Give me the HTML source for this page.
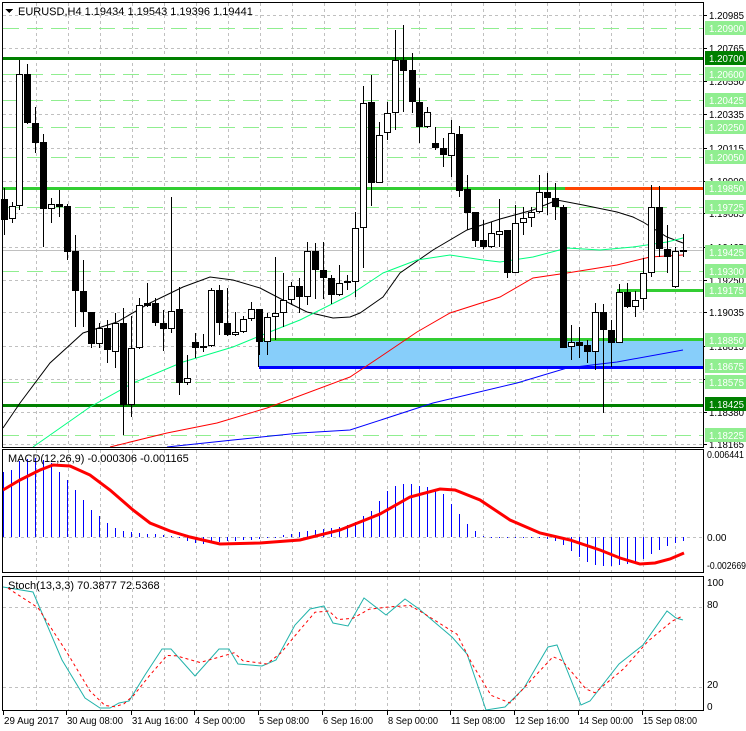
<!DOCTYPE html>
<html><head><meta charset="utf-8"><style>
html,body{margin:0;padding:0;background:#fff;width:746px;height:731px;overflow:hidden}
svg text{font-family:"Liberation Sans",sans-serif;font-size:10px}
</style></head><body>
<svg id="s" width="746" height="731" xmlns="http://www.w3.org/2000/svg" shape-rendering="crispEdges">
<rect width="746" height="731" fill="#fff"/>
<g id="grid"></g>
<g id="lv"></g>
<g id="ma" shape-rendering="auto"></g>
<g id="cd"></g>
<g id="mc"></g>
<g id="st" shape-rendering="auto"></g>
<g id="fr" fill="none" stroke="#000" stroke-width="1">
<rect x="2.5" y="2.5" width="701" height="445"/>
<rect x="2.5" y="449.5" width="701" height="123"/>
<rect x="2.5" y="576.5" width="701" height="134"/>
</g>
<g id="lab"></g>
<text x="18" y="15" style="font-size:11px">EURUSD,H4  1.19434 1.19543 1.19396 1.19441</text>
<path d="M5 9h8l-4 4z" fill="#000"/>
<text x="8" y="462" style="font-size:11px">MACD(12,26,9) -0.000306 -0.001165</text>
<text x="8" y="589" style="font-size:11px">Stoch(13,3,3) 70.3877 72.5368</text>
</svg>
<script>
const NS="http://www.w3.org/2000/svg";
function el(p,t,a){const e=document.createElementNS(NS,t);for(const k in a)e.setAttribute(k,a[k]);document.getElementById(p).appendChild(e);return e;}
function txt(p,x,y,s,fill,len){const a={x:x,y:y,fill:fill||'#000'};if(len){a.textLength=len;a.lengthAdjust='spacingAndGlyphs';}const e=el(p,'text',a);e.textContent=s;return e;}
for(let k=1;k<22;k++){const x=Math.round(4+31.95*k)+.5;
 if(x>703)break;
 el('grid','line',{x1:x,y1:3,x2:x,y2:447,stroke:'#c0c0c0','stroke-dasharray':'3,3'});
 el('grid','line',{x1:x,y1:450,x2:x,y2:572,stroke:'#c0c0c0','stroke-dasharray':'3,3'});
 el('grid','line',{x1:x,y1:577,x2:x,y2:710,stroke:'#c0c0c0','stroke-dasharray':'3,3'});}
const hy=[15,48,81,114,148,181,213,247,280,312,346,379,412,444];
const hl=['1.20985','1.20765','1.20550','1.20335','1.20115','1.19900','1.19685','1.19465','1.19250','1.19035','1.18815','1.18600','1.18380','1.18165'];
hy.forEach((y,i)=>{el('grid','line',{x1:3,y1:y+.5,x2:703,y2:y+.5,stroke:'#c0c0c0','stroke-dasharray':'3,3'});
 el('lab','line',{x1:703,y1:y+.5,x2:707,y2:y+.5,stroke:'#000'});txt('lab',709,y+4,hl[i],'#000',35);});
[607,687].forEach(y=>el('grid','line',{x1:3,y1:y+.5,x2:703,y2:y+.5,stroke:'#c0c0c0','stroke-dasharray':'3,3'}));
el('grid','line',{x1:3,y1:537.5,x2:703,y2:537.5,stroke:'#c0c0c0','stroke-dasharray':'3,3'});
const y=p=>15+(1.20985-p)*15213;
el('lv','rect',{x:259,y:339,width:444,height:28,fill:'#87cefa'});
[1.2090,1.2060,1.20425,1.2025,1.2005,1.19725,1.1930,1.18575,1.18225].forEach(p=>{const yy=Math.round(y(p))+.5;
 el('lv','line',{x1:3,y1:yy,x2:703,y2:yy,stroke:'#90ee90','stroke-dasharray':'16,8'});});
el('lv','line',{x1:3,y1:250.5,x2:703,y2:250.5,stroke:'#c0c0c0'});
el('lv','rect',{x:3,y:57,width:700,height:3,fill:'#008000'});
el('lv','rect',{x:3,y:404,width:700,height:3,fill:'#008000'});
el('lv','rect',{x:3,y:187,width:562,height:3,fill:'#32cd32'});
el('lv','rect',{x:565,y:187,width:138,height:3,fill:'#ff4500'});
el('lv','rect',{x:617,y:289,width:86,height:3,fill:'#32cd32'});
el('lv','rect',{x:259,y:338,width:444,height:3,fill:'#32cd32'});
el('lv','rect',{x:259,y:366,width:444,height:3,fill:'#0000ff'});
el('lv','rect',{x:258,y:339,width:1,height:28,fill:'#000'});
[[1.2090,0],[1.2070,1],[1.2060,0],[1.20425,0],[1.2025,0],[1.2005,0],[1.1985,0],[1.19725,0],[1.19425,0],[1.1930,0],[1.19175,0],[1.1885,0],[1.18675,0],[1.18575,0],[1.18425,1],[1.18225,0]].forEach(([p,d])=>{
 const yy=Math.round(y(p));el('lab','rect',{x:705,y:yy-7,width:41,height:14,fill:d?'#008000':'#90ee90'});
 txt('lab',709,yy+4,p.toFixed(5),'#fff',35);});
txt('lab',707,458,'0.006441','#000',37);txt('lab',707,541,'0.00');txt('lab',707,569,'-0.002669','#000',39);
txt('lab',707,586,'100');txt('lab',707,608,'80');txt('lab',707,688,'20');txt('lab',707,710,'0');
[[3,'29 Aug 2017',55],[66,'30 Aug 08:00',56],[131,'31 Aug 16:00',56],[194,'4 Sep 00:00',50],[258,'5 Sep 08:00',50],[322,'6 Sep 16:00',50],[387,'8 Sep 00:00',50],[450,'11 Sep 08:00',54],[514,'12 Sep 16:00',54],[578,'14 Sep 00:00',54],[642,'15 Sep 08:00',54]].forEach(([x,s,l])=>{
 el('lab','line',{x1:x+.5,y1:711,x2:x+.5,y2:715,stroke:'#000'});txt('lab',x+1,724,s,'#000',l);});
function pl(g,pts,col,w,dash){const a={points:pts.map(p=>p.join(',')).join(' '),fill:'none',stroke:col,'stroke-width':w};if(dash)a['stroke-dasharray']=dash;el(g,'polyline',a);}
pl('ma',[[3,428],[20,403],[50,363],[83,333],[117,322],[150,303],[183,287],[210,277],[233,280],[260,288],[283,300],[307,312],[333,318],[350,317],[360,313],[383,297],[400,273],[433,250],[467,230],[500,219],[533,210],[557,200],[583,205],[617,212],[633,217],[643,222],[667,237],[683,243]],'#000',1);
pl('ma',[[33,447],[90,407],[133,383],[183,362],[233,347],[267,333],[300,320],[350,295],[383,273],[417,260],[450,255],[483,260],[500,262],[533,257],[567,248],[600,250],[633,247],[667,242],[683,238]],'#00ff7f',1);
pl('ma',[[110,447],[167,433],[217,423],[267,408],[350,377],[383,355],[417,332],[450,313],[500,297],[533,278],[567,273],[617,265],[650,257],[683,255]],'#ff0000',1);
pl('ma',[[167,447],[233,440],[300,433],[350,430],[433,403],[517,383],[567,368],[617,362],[683,350]],'#0000ff',1);
const C=[[4,199,220,188,235,0],[12,206,219,202,223,1],[19,74,206,60,210,1],[27,74,123,64,124,0],[35,123,143,107,153,0],[43,142,209,134,247,0],[51,204,209,198,223,1],[59,204,207,190,217,0],[67,206,252,204,260,0],[75,251,291,235,327,0],[83,291,312,260,327,0],[91,312,344,312,348,0],[99,328,344,323,348,1],[107,328,350,320,363,0],[115,323,352,313,368,1],[123,323,405,308,435,0],[131,348,405,316,417,1],[139,305,348,298,349,1],[147,303,306,283,307,0],[155,303,323,298,326,0],[163,323,329,310,351,0],[171,311,329,197,333,1],[179,309,383,287,395,0],[187,378,383,355,385,1],[195,342,348,333,358,0],[203,346,348,334,352,1],[211,290,346,288,347,1],[219,290,323,285,335,0],[227,323,335,288,336,0],[235,332,335,312,336,1],[243,319,332,316,333,1],[251,309,319,302,321,1],[259,309,342,309,355,0],[267,317,342,313,355,1],[275,313,317,257,340,1],[283,300,313,273,327,1],[291,286,300,282,305,1],[299,286,297,278,313,0],[307,251,297,242,305,1],[315,251,270,243,299,0],[323,270,278,242,299,0],[331,278,295,275,304,0],[339,283,295,265,296,1],[347,281,283,275,290,1],
[355,228,282,212,297,1],[363,103,228,86,268,1],[371,102,183,75,206,0],[379,135,183,122,183,1],[387,113,133,102,140,1],[395,60,113,30,130,1],[403,60,71,25,112,0],[412,70,102,53,113,0],[419,102,127,88,143,0],[427,112,127,107,128,1],[435,143,148,127,150,0],[443,148,155,138,167,0],[451,133,156,120,177,1],[459,134,191,126,197,0],[467,189,213,175,230,0],[475,212,241,212,247,0],[483,240,247,220,249,0],[491,233,247,222,248,1],[499,231,235,199,247,1],[507,230,273,230,278,0],[515,223,273,205,273,1],[523,218,223,207,235,1],[531,212,218,207,227,1],[539,192,212,175,213,1],[547,192,198,173,215,0],[555,198,207,183,220,0],[563,207,348,205,348,0],[571,342,347,325,360,1],[579,342,346,327,358,0],[587,345,352,340,363,0],[595,312,352,303,370,1],[603,312,330,304,413,0],[611,330,343,320,367,0],[619,292,343,284,343,1],[627,292,307,283,308,0],[635,300,307,291,317,1],[643,273,299,258,310,1],[651,207,273,185,277,1],[659,207,249,186,257,0],[667,249,257,225,273,0],[675,251,287,247,288,1],[683,250,251,234,257,0]];
C.forEach(([x,t,b,h,l,w])=>{el('cd','rect',{x:x,y:h,width:1,height:l-h,fill:'#000'});
 if(b-t<2){el('cd','rect',{x:x-3,y:t,width:7,height:2,fill:'#000'});return;}
 if(w)el('cd','rect',{x:x-2.5,y:t+.5,width:6,height:b-t-1,fill:'#fff',stroke:'#000'});
 else el('cd','rect',{x:x-3,y:t,width:7,height:b-t,fill:'#000'});});
const HT=[[3,472],[11,470],[19,461],[27,459],[35,458],[43,460],[51,463],[59,472],[67,480],[75,490],[83,500],[91,510],[99,516],[107,523],[115,528],[123,531],[180,537],[188,541],[196,543],[204,544],[212,543],[230,541],[260,539],[290,534],[310,530],[330,528],[350,525],[365,515],[372,510],[380,500],[388,490],[396,485],[404,484],[412,484],[420,486],[428,487],[436,490],[444,495],[452,505],[460,515],[468,525],[476,532],[484,537],[540,537],[556,541],[564,545],[572,552],[580,558],[588,562],[596,565],[604,566],[612,566],[620,565],[628,564],[636,562],[644,558],[652,553],[660,549],[668,546],[676,543],[684,541]];
function hv(x){for(let i=0;i<HT.length-1;i++){if(x>=HT[i][0]&&x<=HT[i+1][0]){const f=(x-HT[i][0])/(HT[i+1][0]-HT[i][0]);return HT[i][1]+f*(HT[i+1][1]-HT[i][1]);}}return 537;}
for(let x=3;x<=684;x+=8){const v=Math.round(hv(x));const a=Math.min(v,537),b=Math.max(v,537);el('mc','rect',{x:x,y:a,width:1,height:Math.max(1,b-a),fill:'#0000ff'});}
el('mc','polyline',{points:'3,490 20,480 40,470 53,465 70,466 90,475 110,490 133,510 150,523 170,531 190,537 220,544 260,543 300,540 340,530 380,514 410,497 440,489 455,490 480,500 510,520 540,533 570,540 600,550 620,558 640,564 655,563 670,559 684,553',fill:'none',stroke:'#ff0000','stroke-width':3,'shape-rendering':'auto'});
const SM=[[3,587],[33,592],[62,660],[85,698],[100,708],[110,708],[119,703],[129,701],[145,675],[162,649],[171,649],[195,676],[219,649],[229,649],[238,664],[262,666],[276,660],[295,625],[310,609],[324,606],[333,623],[348,626],[364,598],[386,615],[405,599],[419,609],[452,637],[467,654],[486,710],[505,707],[524,688],[548,647],[557,645],[581,705],[590,701],[619,664],[643,645],[667,611],[676,618],[683,620]];
pl('st',SM,'#20b2aa',1);
const SS=SM.map((p,i)=>{const a=SM[Math.max(0,i-1)],c=SM[Math.min(SM.length-1,i+1)];return [p[0]+5,(a[1]+p[1]*2+c[1])/4];});
pl('st',SS.filter(p=>p[0]<=686),'#ff0000',1,'3,3');
</script>
</body></html>
